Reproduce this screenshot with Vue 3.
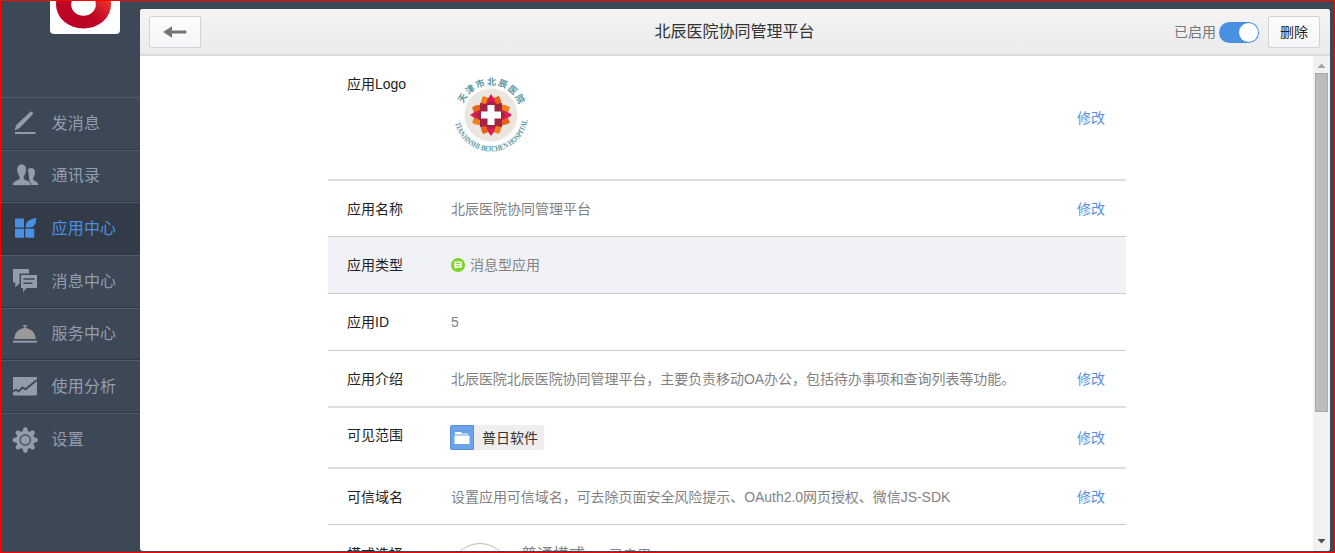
<script setup>
const nav = [
  { id: 'send', label: '发消息' },
  { id: 'contacts', label: '通讯录' },
  { id: 'apps', label: '应用中心', active: true },
  { id: 'messages', label: '消息中心' },
  { id: 'service', label: '服务中心' },
  { id: 'stats', label: '使用分析' },
  { id: 'settings', label: '设置' },
]
const rows = [
  { id: 'logo', label: '应用Logo', edit: true },
  { id: 'name', label: '应用名称', value: '北辰医院协同管理平台', edit: true },
  { id: 'type', label: '应用类型', value: '消息型应用' },
  { id: 'appid', label: '应用ID', value: '5' },
  { id: 'intro', label: '应用介绍', value: '北辰医院北辰医院协同管理平台，主要负责移动OA办公，包括待办事项和查询列表等功能。', edit: true },
  { id: 'scope', label: '可见范围', edit: true },
  { id: 'domain', label: '可信域名', value: '设置应用可信域名，可去除页面安全风险提示、OAuth2.0网页授权、微信JS-SDK', edit: true },
  { id: 'mode', label: '模式选择' },
]
const petals = [0, 45, 90, 135, 180, 225, 270, 315]
</script>

<template>
  <div class="frame">
    <aside class="sidebar">
      <div class="brand">
        <svg width="70" height="34" viewBox="0 0 70 34">
          <defs>
            <linearGradient id="ring" x1="0" y1="1" x2="1" y2="0">
              <stop offset="0.45" stop-color="#bd0426" />
              <stop offset="0.75" stop-color="#e5322c" />
            </linearGradient>
          </defs>
          <ellipse cx="33.500" cy="4.500" rx="27.500" ry="24" fill="url(#ring)" />
          <ellipse cx="33.500" cy="4.500" rx="12.300" ry="11.300" fill="#fff" />
        </svg>
      </div>
      <nav class="nav">
        <a v-for="n in nav" :key="n.id" class="item" :class="{ active: n.active }">
          <svg class="ico" width="28" height="28" viewBox="0 0 28 28" fill="currentColor">
            <template v-if="n.id === 'send'">
              <path d="M18.800 3.200q1.300-1.300 2.600 0t0 2.600L8.600 19l-4.800 2.600L5 16.200z" />
              <rect x="4" y="23" width="20.500" height="2" />
            </template>
            <template v-else-if="n.id === 'contacts'">
              <path d="M17 7.500c1-1.400 2-1.600 3-1.600 2.600 0 4 2 3.900 4.700 0 2.400-.8 4-1.700 5.300v2.200c1.500 1 4.500 1.600 5.300 4.900H19z" />
              <path stroke="#3d4857" stroke-width=".8" d="M10.600 2c3.100 0 5 2.400 4.800 5.700-.1 2.800-1 5.200-2.300 6.700v2.500c2 1.300 7.300 1.800 7.300 6.700H1.300c.2-4.900 4.800-5.400 6.900-6.700v-2.500C6.900 12.900 6 10.500 5.900 7.700 5.700 4.400 7.500 2 10.600 2z" />
            </template>
            <template v-else-if="n.id === 'apps'">
              <rect x="4" y="3.500" width="9" height="9" rx=".7" />
              <rect x="4" y="13.800" width="9" height="9" rx=".7" />
              <rect x="14.300" y="13.800" width="9" height="9" rx=".7" />
              <path d="M14.800 12.500c0-5.500 2-7.500 10.400-9.700 0 6.700-2.200 9.700-7.200 9.700z" />
            </template>
            <template v-else-if="n.id === 'messages'">
              <path d="M2 2h16v4.500H8.500v10L4.300 20.300v-4.800H2z" />
              <path fill-rule="evenodd" d="M10 8h16v13H15.500l-3.500 4V21h-2zM12.500 11.300v1.500h11v-1.500zM12.500 15.500v1.500h9v-1.500z" />
            </template>
            <template v-else-if="n.id === 'service'">
              <g class="bell">
                <path d="M12 5h4v1.300h-1.200v1.600C20.500 8.500 24.500 13 24.800 19H3.200C3.500 13 7.500 8.500 13.200 7.900V6.300H12z" />
              </g>
              <rect x="2" y="20.700" width="24" height="2" />
            </template>
            <template v-else-if="n.id === 'stats'">
              <rect x="2" y="4" width="24" height="18.500" rx="1" />
              <path d="M2 18.500l3-2 2.500 2 4-4 3 1.800L25.800 7" fill="none" stroke="#3d4857" stroke-width="1.800" />
            </template>
            <template v-else>
              <path v-for="a in petals" :key="a" d="M10.800 7l1.800-5.200q1.700-1 3.400 0L17.800 7z" :transform="`rotate(${a} 14.300 14)`" />
              <circle cx="14.300" cy="14" r="9" />
              <circle cx="14.300" cy="14" r="5.200" fill="none" stroke="#3d4857" stroke-width="1.200" />
            </template>
          </svg>
          <span>{{ n.label }}</span>
        </a>
      </nav>
    </aside>

    <main class="panel">
      <header class="head">
        <button class="btn back">
          <svg width="24" height="12" viewBox="0 0 24 12"><path d="M0 6l9-5.800V4.500h14.300v3H9v4.300z" fill="#757575" /></svg>
        </button>
        <h1>北辰医院协同管理平台</h1>
        <div class="right">
          <span class="state">已启用</span>
          <span class="toggle"><i></i></span>
          <button class="btn del">删除</button>
        </div>
      </header>

      <div class="body">
        <div class="scroll">
          <section class="list">
            <div v-for="r in rows" :key="r.id" class="row" :class="r.id">
              <span class="label">{{ r.label }}</span>
              <div class="value">
                <svg v-if="r.id === 'logo'" class="hospital" width="80" height="80" viewBox="-40 -40 80 80">
                  <defs>
                    <path id="arcTop" d="M-30 0A30 30 0 0 1 30 0" />
                    <path id="arcBottom" d="M-36.600-6A37 37 0 1 0 36.600-6" />
                  </defs>
                  <circle r="26.500" fill="#ece6e1" />
                  <g v-for="a in petals" :key="a" :transform="`rotate(${a + 22.5})`">
                    <path d="M-6-9Q-6.500-16 0-20.500Q6.500-16 6-9L0 0z" :fill="a % 90 ? '#f0801c' : '#e8641c'" />
                  </g>
                  <g v-for="a in petals.filter(p => p % 90 === 0)" :key="'p' + a" :transform="`rotate(${a})`">
                    <path d="M-5-11Q-3.500-17 0-21Q3.500-17 5-11L0 0z" fill="#d91c54" />
                  </g>
                  <path d="M-11-12L-5-11L0-14L5-11L11-12L11-5L14 0L11 5L11 12L5 11L0 14L-5 11L-11 12L-11 5L-14 0L-11-5z" fill="#a32340" />
                  <path d="M-3.500-10h7v6.500H10v7H3.500V10h-7V3.500H-10v-7h6.500z" fill="#fff" />
                  <text class="ring-cn"><textPath href="#arcTop" startOffset="11.500" textLength="72">天津市北辰医院</textPath></text>
                  <text class="ring-en"><textPath href="#arcBottom" startOffset="14" textLength="102" lengthAdjust="spacingAndGlyphs">TIANJINSHI BEICHEN HOSPITAL</textPath></text>
                </svg>
                <template v-else-if="r.id === 'type'">
                  <svg class="dot" width="14" height="14" viewBox="0 0 14 14">
                    <circle cx="7" cy="7" r="7" fill="#7ed321" />
                    <path d="M3.300 3.500h7.400v6.300H6l-1.500 1.300V9.800H3.300z" fill="#fff" />
                    <path d="M4.700 5.600h4.600M4.700 7.700h4" stroke="#7ed321" />
                  </svg>
                  <span>{{ r.value }}</span>
                </template>
                <span v-else-if="r.id === 'scope'" class="tag">
                  <span class="folder">
                    <svg width="16" height="14" viewBox="0 0 16 14"><path d="M1 1h6l1 1.500h6v1H1zM.5 4.500h15v8.500H.5z" fill="#fff" /></svg>
                  </span>
                  <span>普日软件</span>
                </span>
                <template v-else-if="r.id === 'mode'">
                  <span class="circle"></span>
                  <span class="mode-name">普通模式</span>
                  <span>已启用</span>
                </template>
                <span v-else>{{ r.value }}</span>
              </div>
              <a v-if="r.edit" class="edit">修改</a>
            </div>
          </section>
        </div>
        <div class="bar">
          <svg width="9" height="5" viewBox="0 0 9 5"><path d="M4.500 0.500L8.500 5H.5z" fill="#a3a3a3" /></svg>
          <div class="thumb"></div>
          <svg class="down" width="9" height="5" viewBox="0 0 9 5"><path d="M.5 0h8L4.500 4.500z" fill="#505050" /></svg>
        </div>
      </div>
    </main>
  </div>
</template>

<style>
body { margin: 0; overflow: hidden; }
</style>

<style scoped>
* { box-sizing: border-box; }
.frame {
  width: 1335px;
  height: 553px;
  border: 1px solid #f00;
  display: flex;
  background: #3d4857;
  overflow: hidden;
  font: 14px/20px "Liberation Sans", "Noto Sans CJK SC", sans-serif;
  color: #222;
}
.sidebar { width: 139px; flex: none; }
.brand {
  width: 70px;
  height: 33px;
  margin-left: 49px;
  background: #fff;
  border-radius: 0 0 4px 4px;
  overflow: hidden;
}
.brand svg { display: block; margin-top: -1px; }
.nav { margin-top: 63px; }
.item {
  display: flex;
  align-items: center;
  height: 52.67px;
  padding-left: 10px;
  border-top: 1px solid #4f5d6b;
  border-bottom: 1px solid #2f3945;
  color: #929dab;
  font-size: 16px;
}
.item:last-child { border-bottom: 0; }
.item.active { background: #323b47; color: #4a90e2; }
.ico { margin-right: 12.5px; flex: none; }
.item span { padding-top: 1px; letter-spacing: 0.2px; }
.bell { color: #999; fill: #999; }

.panel {
  width: 1190px;
  height: 542px;
  margin-top: 8px;
  background: #fff;
  border-radius: 3px;
  overflow: hidden;
  display: flex;
  flex-direction: column;
}
.head {
  height: 47px;
  flex: none;
  display: grid;
  grid-template-columns: 1fr auto 1fr;
  align-items: center;
  padding: 0 10px 0 9px;
  background: linear-gradient(#f4f4f4, #ebebeb);
  border-bottom: 2px solid #d9d9d9;
}
h1 { margin: 0; font-size: 16px; font-weight: 400; line-height: 24px; color: #333; }
.btn {
  width: 52px;
  height: 32px;
  padding: 0;
  display: flex;
  align-items: center;
  justify-content: center;
  border: 1px solid #d3d3d5;
  border-radius: 2px;
  background: linear-gradient(#fbfcfd, #f4f6f9);
  font: inherit;
  color: #222;
}
.right { display: flex; align-items: center; justify-content: flex-end; }
.state { color: #777; }
.toggle {
  width: 40px;
  height: 21px;
  margin: 2px 9px 0 3px;
  padding: 1px;
  border-radius: 11px;
  background: #4a90e2;
  display: flex;
  justify-content: flex-end;
}
.toggle i { width: 19px; height: 19px; border-radius: 50%; background: #fff; }

.body { flex: 1; min-height: 0; display: flex; }
.scroll { flex: 1; overflow: hidden; }
.list { width: 798px; margin-left: 188px; }
.row {
  display: flex;
  align-items: center;
  height: 57px;
  padding: 0 21px 0 19px;
  border-bottom: 1px solid #ccc;
}
.label { width: 104px; flex: none; }
.value { flex: 1; display: flex; align-items: center; color: #828282; white-space: nowrap; }
.edit { color: #5a8fde; }
.row.logo { height: 125px; border-bottom: 2px solid #ddd; }
.logo .label { align-self: flex-start; margin-top: 18px; }
.logo .value { align-self: flex-start; margin-top: 19px; }
.row.name { height: 56px; }
.row.type { background: #f1f2f7; }
.row.intro { border-bottom: 2px solid #ddd; }
.intro .value { letter-spacing: -0.05px; }
.row.scope { height: 61px; border-bottom: 2px solid #ddd; }
.scope .label { align-self: flex-start; margin-top: 17px; }
.row.domain { height: 56px; }
.domain .value { letter-spacing: -0.04px; }
.row.mode { align-items: flex-start; border: 0; }
.mode .label { margin-top: 19px; }
.dot { margin-right: 5px; }
.tag { display: flex; align-items: center; height: 25px; margin-left: -1px; padding-right: 6px; background: #eee; border-radius: 2px; color: #333; }
.folder {
  width: 24px;
  height: 25px;
  margin-right: 8px;
  display: flex;
  align-items: center;
  justify-content: center;
  background: #6ba3e8;
  border: 1px solid #5791da;
  border-radius: 2px 0 0 2px;
}
.mode .value { align-items: flex-start; }
.mode .value > span { margin-top: 20px; }
.mode .value .circle { width: 60px; height: 60px; margin: 18px 11px 0 -1px; border: 1px solid #bbb; border-radius: 50%; }
.mode .value .mode-name { font-size: 16px; margin-right: 24px; }
.ring-cn { font: 700 9px "Liberation Serif", "Noto Sans CJK SC", serif; fill: #5b979e; }
.ring-en { font: 700 8px "Liberation Serif", serif; fill: #5b979e; }

.bar {
  width: 17px;
  padding: 7px 2px 7px;
  display: flex;
  flex-direction: column;
  align-items: center;
  background: #f1f1f1;
}
.thumb { width: 13px; height: 339px; margin-top: 5px; background: #bcbcbc; border: 1px solid #a9a9a9; }
.down { margin-top: auto; }
</style>
